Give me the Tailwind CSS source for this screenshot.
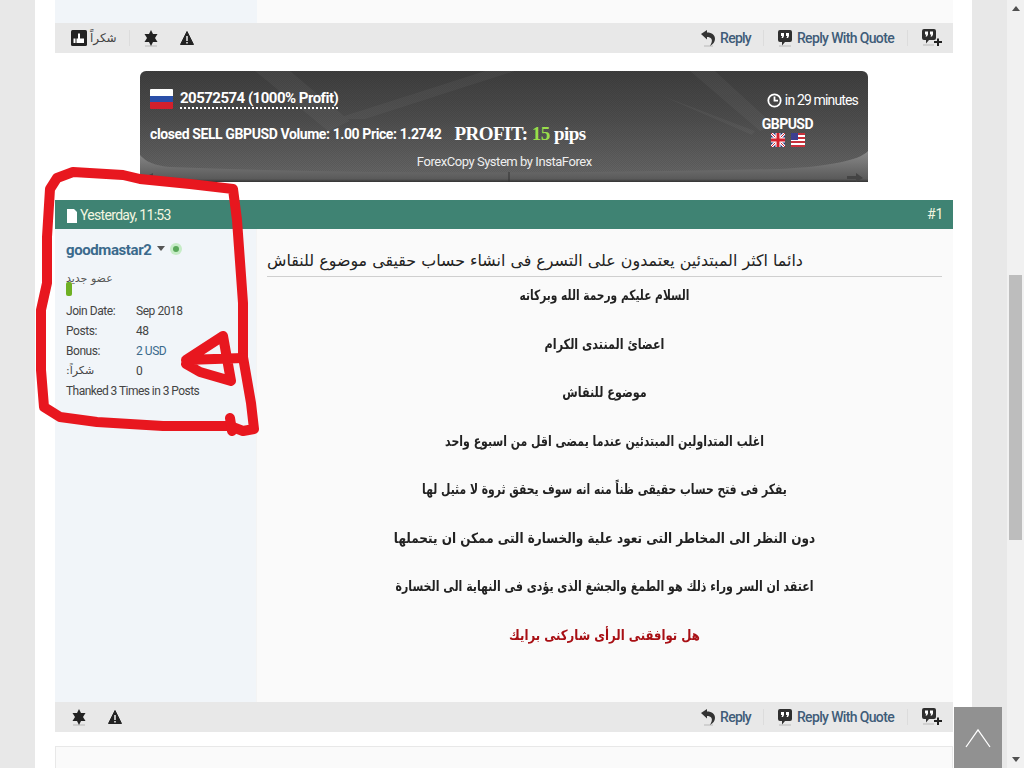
<!DOCTYPE html>
<html lang="en">
<head>
<meta charset="utf-8">
<title>Forum post</title>
<script src="https://cdn.jsdelivr.net/npm/@tailwindcss/browser@4"></script>
</head>
<body class="m-0 overflow-hidden">
<div class="relative flex h-[768px] w-[1024px] overflow-hidden bg-[#e8e8e8] font-['Roboto','DejaVu_Sans',sans-serif]">
  <div class="w-[35px] shrink-0"></div>
  <main class="h-full w-[937px] shrink-0 bg-white pl-[20px] pr-[19px]">
    <div class="flex h-[23px]">
      <div class="w-[202px] bg-[#f1f5f9]"></div>
      <div class="flex-1 bg-[#fafafa]"></div>
    </div>
    <div class="flex h-[30px] items-center bg-[#e8e8e8] pl-[16px] pr-[10px] text-[14px] font-medium text-[#3f5c78]">
      <svg class="h-[16px] w-[16px]" viewBox="0 0 16 16"><rect width="16" height="16" rx="1.500" fill="#222"/><path d="M2.500 8.500h2V13h-2zM5.500 8.500h1.500V3.500h2v5h4V13h-7.500z" fill="#fff"/></svg>
      <span dir="rtl" class="ml-[3px] font-['DejaVu_Sans',sans-serif] text-[12px] font-normal text-[#444]">شكراً</span>
      <span class="ml-[12px] h-[16px] w-px bg-[#dcdcdc]"></span>
      <svg class="ml-[13px] h-[17px] w-[16px]" viewBox="0 0 16 17"><path d="M2 16h12" stroke="#999" opacity=".6"/><path d="M8 0l2 4h4.500L12 8l2.500 4H10l-2 4-2-4H1.500L4 8 1.500 4H6z" fill="#222"/></svg>
      <svg class="ml-[20px] h-[16px] w-[16px]" viewBox="0 0 16 16"><path d="M8 1.500l6.500 13h-13z" fill="#222" stroke="#222" stroke-linejoin="round"/><path d="M7.300 6h1.400v5H7.300zM7.300 12h1.400v1.500H7.300z" fill="#fff"/></svg>
      <div class="ml-auto flex items-center">
        <svg class="h-[17px] w-[15px]" viewBox="0 0 15 17"><path d="M3 16h9" stroke="#999" opacity=".6"/><path d="M0 4l6-4v2.500C11 2.500 14 5 14 9c0 3-2 5-5 7 1.500-3 2.500-5 1.500-7C9.500 7.500 8 7 6 7v2.500z" fill="#333"/></svg>
        <span class="ml-[4px] tracking-[-0.75px]">Reply</span>
        <span class="ml-[12px] h-[16px] w-px bg-[#dcdcdc]"></span>
        <svg class="ml-[14px] h-[17px] w-[14px]" viewBox="0 0 14 17"><path d="M1 16h12" stroke="#999" opacity=".6"/><path d="M2 0h10a2 2 0 0 1 2 2v8a2 2 0 0 1-2 2H7l-3 3.500V12H2a2 2 0 0 1-2-2V2a2 2 0 0 1 2-2z" fill="#2f2f2f"/><path d="M3 3h3v3l-1 2H3.500L4.300 6H3zM8 3h3v3l-1 2H8.500L9.300 6H8z" fill="#fff"/></svg>
        <span class="ml-[5px] tracking-[-0.65px]">Reply With Quote</span>
        <span class="ml-[13px] h-[16px] w-px bg-[#dcdcdc]"></span>
        <svg class="ml-[14px] h-[18px] w-[21px]" viewBox="0 0 21 18"><path d="M1 16h11" stroke="#999" opacity=".6"/><path d="M2 0h10a2 2 0 0 1 2 2v7a2 2 0 0 1-2 2H7l-3 3.500V11H2a2 2 0 0 1-2-2V2a2 2 0 0 1 2-2z" fill="#2f2f2f"/><path d="M3 2.500h3v3l-1 2H3.500l.8-2H3zM8 2.500h3v3l-1 2H8.500l.8-2H8z" fill="#fff"/><path d="M15 9.500h2V12h3v2h-3v3h-2v-3h-3v-2h3z" fill="#222"/></svg>
      </div>
    </div>

    <div class="relative ml-[85px] mt-[18px] flex h-[111px] w-[728px] justify-between overflow-hidden rounded-t-[6px] bg-[linear-gradient(180deg,#3e3e3e_0%,#4e4e4e_45%,#686868_100%)] pl-[10px] pr-[10px] text-white">
      <svg class="absolute left-0 top-0 h-[111px] w-[728px]" viewBox="0 0 728 111">
        <defs>
          <pattern id="dither" width="2" height="2" patternUnits="userSpaceOnUse"><rect width="1" height="1" fill="#000" opacity=".08"/><rect x="1" y="1" width="1" height="1" fill="#000" opacity=".08"/></pattern>
          <linearGradient id="band" x1="0" y1="0" x2="0" y2="1"><stop offset="0" stop-color="#8a8a8a"/><stop offset=".45" stop-color="#727272"/><stop offset=".9" stop-color="#5a5a5a"/><stop offset="1" stop-color="#333"/></linearGradient>
        </defs>
        <path d="M115 0h35l60 50-22 10zM345 0h30L225 48h-30zM550 0h25l60 55-15 5zM520 24l95 36-3 4z" fill="#fff" opacity=".045"/>
        <rect width="728" height="111" fill="url(#dither)"/>
        <path d="M0 84Q8 94 30 96Q300 106 640 98Q715 94 728 80V111H0z" fill="url(#band)"/>
        <path d="M369 101v10" stroke="#333"/>
        <path d="M5 106l8-4v8z" fill="#444"/>
        <path d="M707 105h9v-3l7 5-7 4v-3h-9z" fill="#444"/>
      </svg>
      <div class="relative">
        <div class="mt-[18px] flex items-center">
          <div class="flex h-[20px] w-[23px] flex-col overflow-hidden rounded-[1px]"><div class="flex-1 bg-white"></div><div class="flex-1 bg-[#2a4fa8]"></div><div class="flex-1 bg-[#d3202c]"></div></div>
          <span class="ml-[7px] border-b-2 border-dotted border-white text-[15px] font-bold leading-[18px] tracking-[-0.52px]">20572574 (1000% Profit)</span>
        </div>
        <div class="mt-[11px] flex items-center">
          <span class="text-[14px] font-bold tracking-[-0.4px]">closed SELL GBPUSD Volume: 1.00 Price: 1.2742</span>
          <span class="ml-[13px] font-['Liberation_Serif',serif] text-[19px] font-bold tracking-[-0.52px]">PROFIT: <span class="text-[#9ade4a]">15</span> pips</span>
        </div>
        <div class="mt-[3px] -mr-[6px] text-right text-[13px] tracking-[-0.45px] text-[#eee]">ForexCopy System by InstaForex</div>
      </div>
      <div class="relative flex flex-col items-end">
        <div class="mt-[19px] flex items-center text-[14px] tracking-[-0.85px]">
          <svg class="mr-[3px] h-[15px] w-[15px]" viewBox="0 0 15 15" fill="none" stroke="#fff" stroke-width="1.800"><circle cx="7.500" cy="7.500" r="6.200"/><path d="M7.500 3.500v4.200h3.500"/></svg>
          in 29 minutes
        </div>
        <div class="mr-[45px] mt-[5px] text-[14px] font-bold leading-[16px] tracking-[-0.55px]">GBPUSD</div>
        <div class="mr-[53px] mt-[1px] flex gap-[6px]">
          <svg class="h-[14px] w-[14px]" viewBox="0 0 14 14"><rect width="14" height="14" fill="#26327d"/><path d="M0 0l14 14M14 0L0 14" stroke="#fff" stroke-width="3"/><path d="M0 0l14 14M14 0L0 14" stroke="#d3202c" stroke-width="1"/><path d="M7 0v14M0 7h14" stroke="#fff" stroke-width="5"/><path d="M7 0v14M0 7h14" stroke="#d3202c" stroke-width="3"/></svg>
          <svg class="h-[14px] w-[14px]" viewBox="0 0 14 14"><rect width="14" height="14" fill="#fff"/><path d="M0 1h14M0 5h14M0 9h14M0 13h14" stroke="#c8303a" stroke-width="2"/><rect width="7" height="7" fill="#3c3f8f"/></svg>
        </div>
      </div>
    </div>

    <article class="mt-[18px]">
      <header class="flex h-[29px] items-center justify-between bg-[#3f8373] pl-[12px] pr-[10px] text-[14px] text-[#f3f6e0]">
        <div class="mt-[2px] flex items-center">
          <svg class="mr-[3px] h-[14px] w-[10px]" viewBox="0 0 10 14"><path d="M0 0h7l3 3v11H0z" fill="#fff"/></svg>
          <span class="tracking-[-0.68px]">Yesterday, 11:53</span>
        </div>
        <span class="mb-[1px] tracking-[-0.3px]">#1</span>
      </header>
      <div class="flex h-[473px]">
        <aside class="w-[202px] border-r border-[#f4f4f4] bg-[#f1f5f9] pl-[11px] text-[12px] text-[#444]">
          <div class="mt-[10px] flex items-center">
            <span class="text-[15px] font-bold tracking-[-0.4px] text-[#3b6a8c]">goodmastar2</span>
            <span class="ml-[6px] mb-[3px] h-0 w-0 border-x-[4px] border-t-[5px] border-x-transparent border-t-[#555]"></span>
            <span class="mb-[3px] ml-[5px] flex h-[12px] w-[12px] items-center justify-center rounded-full bg-[#c6ecc6]"><span class="h-[6px] w-[6px] rounded-full bg-[#5aa85a]"></span></span>
          </div>
          <div dir="rtl" class="mt-[11px] w-fit font-['DejaVu_Sans',sans-serif] text-[11px] leading-[11px] text-[#555]">عضو جديد</div>
          <div class="-mt-[2px] h-[14px] w-[6px] rounded-[2px] bg-[#6fb023]"></div>
          <dl class="mt-[5px] grid grid-cols-[70px_1fr] text-[12px] leading-[20px] tracking-[-0.45px]">
            <dt>Join Date:</dt><dd>Sep 2018</dd>
            <dt>Posts:</dt><dd>48</dd>
            <dt>Bonus:</dt><dd class="text-[#3b6a8c]">2 USD</dd>
            <dt class="font-['DejaVu_Sans',sans-serif] text-[11px]">:شكراً</dt><dd>0</dd>
            <dt class="col-span-2 tracking-[-0.55px]">Thanked 3 Times in 3 Posts</dt>
          </dl>
        </aside>
        <section dir="rtl" class="flex-1 bg-[#fafafa] pl-[10px] pr-[11px] font-['DejaVu_Sans',sans-serif] text-[#222]">
          <h2 class="mt-[18px] border-b border-[#cfcfcf] pb-[2px] text-left text-[15.9px] leading-[27px] font-normal">دائما اكثر المبتدئين يعتمدون على التسرع فى انشاء حساب حقيقى موضوع للنقاش</h2>
          <div class="mt-[6px] flex flex-col gap-[24.500px] text-center text-[14px] leading-[24px] font-bold text-[#222]">
            <p class="scale-x-[0.76]">السلام عليكم ورحمة الله وبركاته</p>
            <p class="scale-x-[0.8]">اعضائ المنتدى الكرام</p>
            <p class="scale-x-[0.8]">موضوع للنقاش</p>
            <p class="scale-x-[0.78]">اغلب المتداولين المبتدئين عندما يمضى اقل من اسبوع واحد</p>
            <p class="scale-x-[0.77]">يفكر فى فتح حساب حقيقى ظناً منه انه سوف يحقق ثروة لا مثيل لها</p>
            <p class="scale-x-[0.86]">دون النظر الى المخاطر التى تعود علية والخسارة التى ممكن ان يتحملها</p>
            <p class="scale-x-[0.786]">اعتقد ان السر وراء ذلك هو الطمغ والجشغ الذى يؤدى فى النهاية الى الخسارة</p>
            <p class="scale-x-[0.836] text-[#a80f14]">هل توافقنى الرأى شاركنى برايك</p>
          </div>
        </section>
      </div>
      <div class="flex h-[30px] items-center bg-[#e8e8e8] pl-[16px] pr-[10px] text-[14px] font-medium text-[#3f5c78]">
        <svg class="h-[17px] w-[16px]" viewBox="0 0 16 17"><path d="M2 16h12" stroke="#999" opacity=".6"/><path d="M8 0l2 4h4.500L12 8l2.500 4H10l-2 4-2-4H1.500L4 8 1.500 4H6z" fill="#222"/></svg>
        <svg class="ml-[20px] h-[16px] w-[16px]" viewBox="0 0 16 16"><path d="M8 1.500l6.500 13h-13z" fill="#222" stroke="#222" stroke-linejoin="round"/><path d="M7.300 6h1.400v5H7.300zM7.300 12h1.400v1.500H7.300z" fill="#fff"/></svg>
        <div class="ml-auto flex items-center">
          <svg class="h-[17px] w-[15px]" viewBox="0 0 15 17"><path d="M3 16h9" stroke="#999" opacity=".6"/><path d="M0 4l6-4v2.500C11 2.500 14 5 14 9c0 3-2 5-5 7 1.500-3 2.500-5 1.500-7C9.500 7.500 8 7 6 7v2.500z" fill="#333"/></svg>
          <span class="ml-[4px] tracking-[-0.75px]">Reply</span>
          <span class="ml-[12px] h-[16px] w-px bg-[#dcdcdc]"></span>
          <svg class="ml-[14px] h-[17px] w-[14px]" viewBox="0 0 14 17"><path d="M1 16h12" stroke="#999" opacity=".6"/><path d="M2 0h10a2 2 0 0 1 2 2v8a2 2 0 0 1-2 2H7l-3 3.500V12H2a2 2 0 0 1-2-2V2a2 2 0 0 1 2-2z" fill="#2f2f2f"/><path d="M3 3h3v3l-1 2H3.500L4.300 6H3zM8 3h3v3l-1 2H8.500L9.300 6H8z" fill="#fff"/></svg>
          <span class="ml-[5px] tracking-[-0.65px]">Reply With Quote</span>
          <span class="ml-[13px] h-[16px] w-px bg-[#dcdcdc]"></span>
          <svg class="ml-[14px] h-[18px] w-[21px]" viewBox="0 0 21 18"><path d="M1 16h11" stroke="#999" opacity=".6"/><path d="M2 0h10a2 2 0 0 1 2 2v7a2 2 0 0 1-2 2H7l-3 3.500V11H2a2 2 0 0 1-2-2V2a2 2 0 0 1 2-2z" fill="#2f2f2f"/><path d="M3 2.500h3v3l-1 2H3.500l.8-2H3zM8 2.500h3v3l-1 2H8.500l.8-2H8z" fill="#fff"/><path d="M15 9.500h2V12h3v2h-3v3h-2v-3h-3v-2h3z" fill="#222"/></svg>
        </div>
      </div>
    </article>
    <div class="mt-[14px] h-[40px] border border-[#e8e8e8] bg-[#fafafa]"></div>
  </main>
  <div class="w-[35px] shrink-0"></div>
  <div class="flex w-[17px] shrink-0 flex-col items-center bg-[#f1f1f1]">
    <span class="mt-[6px] h-0 w-0 border-x-[4px] border-b-[5px] border-x-transparent border-b-[#505050]"></span>
    <div class="mt-[264px] h-[265px] w-[13px] bg-[#bdbdbd]"></div>
    <span class="mt-auto mb-[6px] h-0 w-0 border-x-[4px] border-t-[5px] border-x-transparent border-t-[#505050]"></span>
  </div>

  <div class="absolute left-[954px] top-[707px] flex h-[61px] w-[48px] items-center justify-center bg-[#919191]">
    <svg class="h-[22px] w-[28px]" viewBox="0 0 28 22" fill="none" stroke="#fff" stroke-width="1.300"><path d="M2 20L14 3l12 17"/></svg>
  </div>

  <svg class="pointer-events-none absolute left-0 top-0 h-[768px] w-[1024px] blur-[0.5px]" viewBox="0 0 1024 768" fill="none" stroke="#e8171f" stroke-width="10" stroke-linecap="round" stroke-linejoin="round">
    <path d="M233 189L190 184L140 179L123 175L73 172L57 178L50 189L47 237L47 283L41 310L41 370L44 407L60 417L97 422L163 426L230 426L243 431L254 429L251 403L243 357L243 303L237 220L233 189"/>
    <path d="M230 418L232 431M243 358L186 360L223 336L231 381L200 372L186 364"/>
  </svg>
</div>
</body>
</html>
